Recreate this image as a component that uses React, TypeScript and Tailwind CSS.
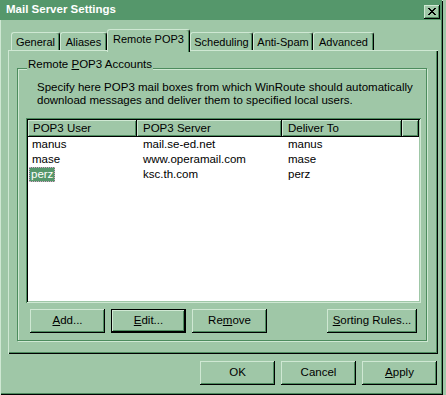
import React from "react";

const RAISED =
  "shadow-[inset_-1px_-1px_0_#000,inset_1px_1px_0_#cfe8d3,inset_-2px_-2px_0_#4d8c5e]";

function Btn({
  children,
  w,
  def,
}: {
  children: React.ReactNode;
  w: string;
  def?: boolean;
}) {
  if (def) {
    return (
      <div className={`${w} h-[24px] border border-black`}>
        <div
          className={`h-full flex items-center justify-center text-[11.5px] text-black ${RAISED}`}
        >
          {children}
        </div>
      </div>
    );
  }
  return (
    <div
      className={`${w} h-[24px] flex items-center justify-center text-[11.5px] text-black ${RAISED}`}
    >
      {children}
    </div>
  );
}

function Tab({ label, w, active }: { label: string; w: string; active?: boolean }) {
  if (active) {
    return (
      <div
        className={`${w} h-[23px] -mb-[2px] relative z-10 bg-[#9fc7a7] border-t border-l border-r border-t-[#cfe8d3] border-l-[#cfe8d3] border-r-black rounded-t-[3px] shadow-[inset_-1px_0_0_#4d8c5e] text-center pt-[3px] text-[11px] leading-[13px]`}
      >
        {label}
      </div>
    );
  }
  return (
    <div
      className={`${w} h-[18px] border-t border-l border-r border-t-[#cfe8d3] border-l-[#cfe8d3] border-r-black rounded-t-[3px] shadow-[inset_-1px_0_0_#4d8c5e] text-center pt-[3px] text-[11px] leading-[13px]`}
    >
      {label}
    </div>
  );
}

const rows = [
  { user: "manus", server: "mail.se-ed.net", to: "manus" },
  { user: "mase", server: "www.operamail.com", to: "mase" },
  { user: "perz", server: "ksc.th.com", to: "perz", sel: true },
];

export default function App() {
  return (
    <div className="w-[446px] h-[395px] bg-[#9fc7a7] font-['Liberation_Sans',Arial,sans-serif] text-black">
      <div className="w-[443px] h-[395px] flex flex-col shadow-[inset_1px_1px_0_#cfe8d3,inset_-1px_-1px_0_#000,inset_-2px_-2px_0_#4d8c5e]">
        {/* Title bar */}
        <div className="h-[20px] mr-[1px] bg-[#55976b] flex items-center justify-between pl-[6px] pr-[2px]">
          <span className="text-white font-bold text-[11.5px] leading-none">
            Mail Server Settings
          </span>
          <div
            className={`w-[16px] h-[14px] mt-[4px] bg-[#9fc7a7] flex items-center justify-center ${RAISED}`}
          >
            <svg width="8" height="7" viewBox="0 0 8 7" className="-mt-px">
              <path d="M0 0h2v1h-2zM6 0h2v1h-2zM1 1h2v1h-2zM5 1h2v1h-2zM2 2h4v1h-4zM3 3h2v1h-2zM2 4h4v1h-4zM1 5h2v1h-2zM5 5h2v1h-2zM0 6h2v1h-2zM6 6h2v1h-2z" fill="#000" />
            </svg>
          </div>
        </div>

        <div className="pl-[8px] pr-[5px] pt-[9px]">
          {/* Tabs */}
          <div className="flex items-end h-[21px] pl-[3px]">
            <Tab label="General" w="w-[49px]" />
            <Tab label="Aliases" w="w-[47px]" />
            <Tab label="Remote POP3" w="w-[83px]" active />
            <Tab label="Scheduling" w="w-[63px]" />
            <Tab label="Anti-Spam" w="w-[60px]" />
            <Tab label="Advanced" w="w-[61px]" />
          </div>

          {/* Panel */}
          <div className="h-[304px] pt-[18px] pl-[9px] shadow-[inset_1px_1px_0_#cfe8d3,inset_-1px_-1px_0_#000,inset_-2px_-2px_0_#4d8c5e]">
            <div className="relative w-[410px] h-[273px] border border-[#4d8c5e] shadow-[inset_1px_1px_0_#cfe8d3,1px_1px_0_#cfe8d3]">
              <span className="absolute left-[9px] -top-[11px] px-[1px] bg-[#9fc7a7] text-[11.5px] leading-[13px]">
                Remote <u>P</u>OP3 Accounts
              </span>

              <p className="pl-[19px] pt-[12px] text-[11.5px] leading-[13px]">
                Specify here POP3 mail boxes from which WinRoute should automatically
                <br />
                download messages and deliver them to specified local users.
              </p>

              {/* List */}
              <div className="ml-[8px] mt-[11px] w-[395px] h-[185px] bg-white p-[2px] shadow-[inset_1px_1px_0_#4d8c5e,inset_-1px_-1px_0_#cfe8d3,inset_2px_2px_0_#000,inset_-2px_-2px_0_#9fc7a7]">
                <div className="flex h-[17px] text-[11.5px] leading-[13px]">
                  <div className={`w-[109px] bg-[#9fc7a7] pl-[5px] pt-[2px] ${RAISED}`}>POP3 User</div>
                  <div className={`w-[145px] bg-[#9fc7a7] pl-[6px] pt-[2px] ${RAISED}`}>POP3 Server</div>
                  <div className={`w-[120px] bg-[#9fc7a7] pl-[6px] pt-[2px] ${RAISED}`}>Deliver To</div>
                  <div className={`flex-1 bg-[#9fc7a7] ${RAISED}`} />
                </div>
                {rows.map((r) => (
                  <div key={r.user} className="flex h-[15px] text-[11.5px] leading-[15px]">
                    <div className="w-[109px] pl-[1px]">
                      {r.sel ? (
                        <span className="inline-block h-[15px] px-[2px] bg-[#55976b] text-white outline outline-1 outline-dotted outline-[#d9a0c8] -outline-offset-1">
                          {r.user}
                        </span>
                      ) : (
                        <span className="pl-[3px]">{r.user}</span>
                      )}
                    </div>
                    <div className="w-[145px] pl-[6px]">{r.server}</div>
                    <div className="w-[120px] pl-[6px]">{r.to}</div>
                  </div>
                ))}
              </div>

              {/* Buttons */}
              <div className="ml-[8px] mt-[6px] w-[395px] px-[4px] flex justify-between">
                <div className="flex gap-[6px]">
                  <Btn w="w-[75px]">
                    <u>A</u>dd...
                  </Btn>
                  <Btn w="w-[75px]" def>
                    <u>E</u>dit...
                  </Btn>
                  <Btn w="w-[75px]">
                    Re<u>m</u>ove
                  </Btn>
                </div>
                <Btn w="w-[90px]">
                  <u>S</u>orting Rules...
                </Btn>
              </div>
            </div>
          </div>

          {/* Dialog buttons */}
          <div className="mt-[7px] pr-[1px] flex justify-end gap-[6px]">
            <Btn w="w-[75px]">OK</Btn>
            <Btn w="w-[75px]">Cancel</Btn>
            <Btn w="w-[75px]">
              <u>A</u>pply
            </Btn>
          </div>
        </div>
      </div>
    </div>
  );
}
